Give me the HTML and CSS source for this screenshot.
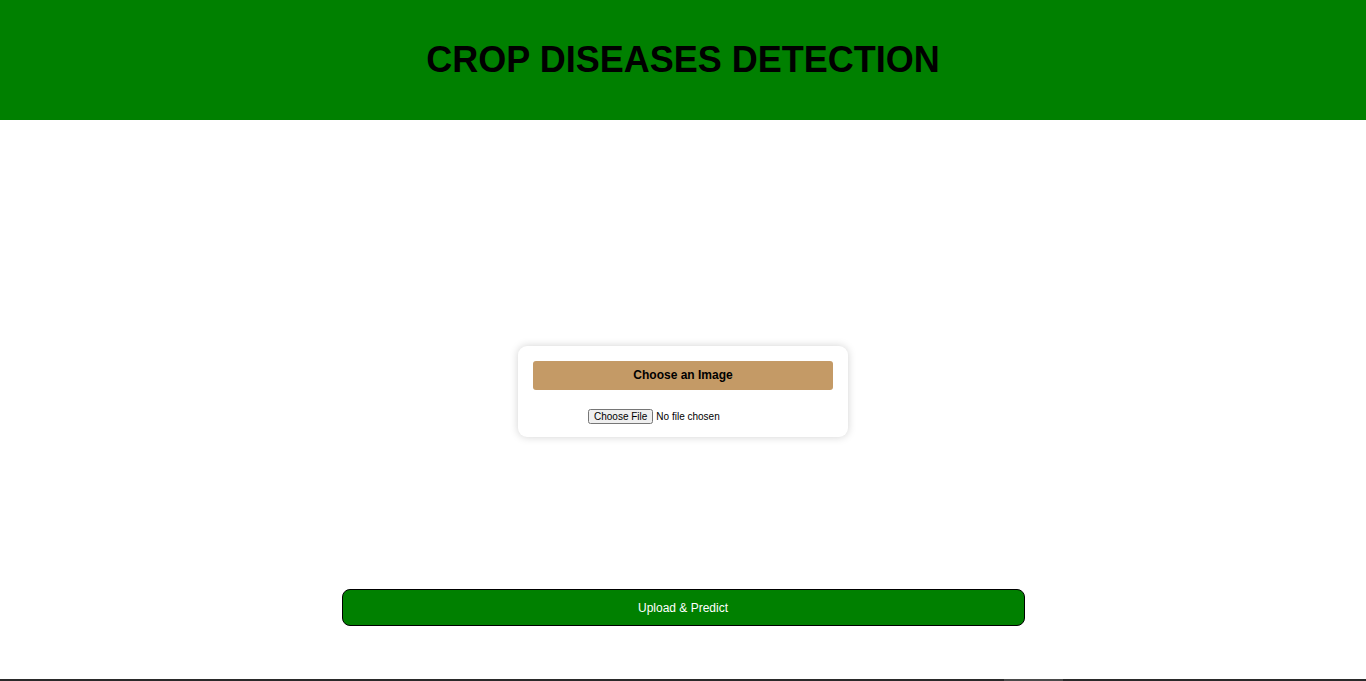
FILE: index.html
```html
<!DOCTYPE html>
<html>
<head>
<meta charset="utf-8">
<title>Crop Diseases Detection</title>
<link rel="stylesheet" href="styles.css">
</head>
<body>
<header class="header">
  <h1 class="title">CROP DISEASES DETECTION</h1>
</header>
<main class="main">
  <div class="card">
    <div class="choose-label">Choose an Image</div>
    <div class="file-row"><input class="file-input" type="file"></div>
  </div>
  <button class="predict-btn">Upload &amp; Predict</button>
</main>
<footer class="footer"><span class="footer-mark"></span></footer>
</body>
</html>
```

FILE: styles.css
```css
html, body {
  margin: 0;
  padding: 0;
  background: #ffffff;
  font-family: "Liberation Sans", Arial, sans-serif;
}
.header {
  background: #008000;
  height: 120px;
  display: flex;
  align-items: center;
  justify-content: center;
}
.title {
  margin: 0;
  font-size: 36px;
  font-weight: bold;
  color: #000000;
}
.main {
  display: flex;
  flex-direction: column;
  align-items: center;
  padding-top: 226px;
  padding-bottom: 53px;
}
.card {
  width: 300px;
  height: 61px;
  padding: 15px;
  background: #ffffff;
  border-radius: 9px;
  box-shadow: 0 0 8px rgba(0, 0, 0, 0.18);
}
.choose-label {
  height: 29px;
  line-height: 29px;
  background: #c49a66;
  border-radius: 3px;
  text-align: center;
  font-size: 12px;
  font-weight: bold;
  color: #000;
}
.file-row {
  margin-top: 19px;
  padding-left: 55px;
}
.file-input {
  font-family: "Liberation Sans", Arial, sans-serif;
  font-size: 10px;
  line-height: 12px;
  margin: 0;
  display: block;
}
.file-input::file-selector-button {
  padding: 0 4px;
  margin-right: 3px;
  font-size: 10px;
}
.predict-btn {
  margin-top: 152px;
  width: 683px;
  height: 37px;
  background: #008000;
  color: #ffffff;
  border: 1px solid #000000;
  border-radius: 8px;
  font-family: "Liberation Sans", Arial, sans-serif;
  font-size: 12px;
  cursor: pointer;
}
.footer {
  height: 2px;
  background: #2a2a2a;
  display: flex;
}
.footer-mark {
  margin-left: 1004px;
  width: 59px;
  background: #4a4a4a;
}
```
